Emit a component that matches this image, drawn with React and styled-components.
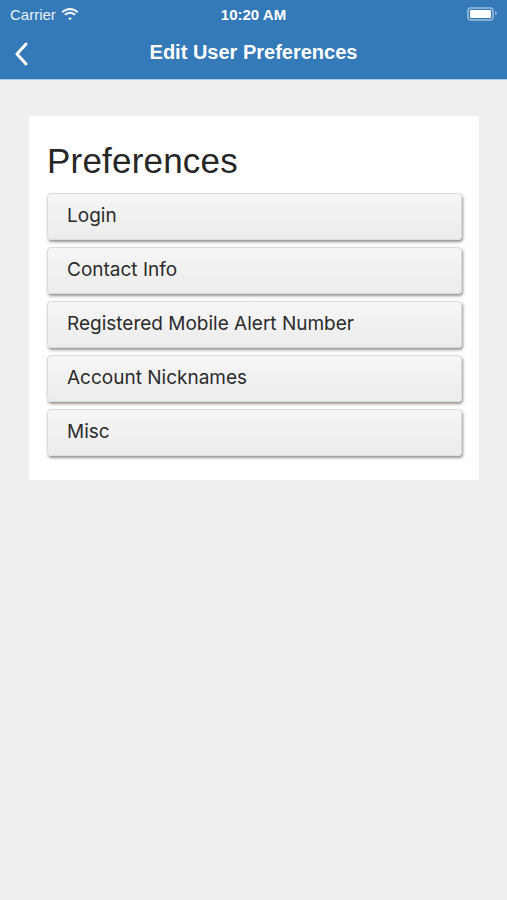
import React from "react";
import styled, { createGlobalStyle } from "styled-components";

const GlobalStyle = createGlobalStyle`
	html, body {
		margin: 0;
		padding: 0;
		background: #efefef;
		font-family: "Liberation Sans", Arial, sans-serif;
	}
`;

const Screen = styled.div`
	width: 507px;
	min-height: 900px;
	background: #efefef;
`;

const Header = styled.header`
	background: #3479b8;
	border-bottom: 1px solid #a9c6e2;
	height: 79px;
	color: #fff;
	display: flex;
	flex-direction: column;
`;

const StatusBar = styled.div`
	height: 28px;
	display: grid;
	grid-template-columns: 1fr auto 1fr;
	align-items: center;
	padding: 0 10px;
	font-size: 15px;
`;

const Carrier = styled.div`
	display: flex;
	align-items: center;
	gap: 5px;
	opacity: 0.9;
`;

const Clock = styled.div`
	font-weight: bold;
	font-size: 15px;
`;

const Battery = styled.div`
	justify-self: end;
	width: 21px;
	height: 8px;
	border: 2px solid rgba(255, 255, 255, 0.4);
	border-radius: 4px;
	background: #fff;
	background-clip: content-box;
	padding: 1px;
	position: relative;
	margin-right: 3px;

	&::after {
		content: "";
		position: absolute;
		right: -5px;
		top: 2px;
		width: 2px;
		height: 4px;
		border-radius: 0 2px 2px 0;
		background: rgba(255, 255, 255, 0.4);
	}
`;

const NavBar = styled.div`
	flex: 1;
	display: grid;
	grid-template-columns: 60px 1fr 60px;
	align-items: center;
`;

const BackButton = styled.button`
	background: none;
	border: 0;
	padding: 0 0 0 14px;
	display: flex;
	align-items: center;
	color: #fff;
`;

const Title = styled.h1`
	margin: 0;
	text-align: center;
	font-size: 20px;
	font-weight: bold;
	padding-bottom: 2px;
`;

const Content = styled.main`
	padding: 36px 28px 0 29px;
`;

const Card = styled.section`
	background: #fff;
	padding: 24px 18px 24px 18px;
	display: flex;
	flex-direction: column;
`;

const Heading = styled.h2`
	margin: 0 0 11px 0;
	font-size: 35px;
	font-weight: normal;
	color: #262626;
	line-height: 42px;
	letter-spacing: 0.2px;
`;

const List = styled.div`
	display: flex;
	flex-direction: column;
	gap: 7px;
`;

const Item = styled.button`
	height: 47px;
	width: 415px;
	text-align: left;
	padding: 0 0 2px 19px;
	font-family: Inter, "Liberation Sans", sans-serif;
	font-size: 19px;
	color: #2b2b2b;
	background: linear-gradient(#f6f6f6, #ececec);
	border: 1px solid #dcdcdc;
	border-radius: 4px;
	box-shadow: 1px 2px 3px rgba(70, 55, 45, 0.55);
`;

const items = [
	"Login",
	"Contact Info",
	"Registered Mobile Alert Number",
	"Account Nicknames",
	"Misc",
];

const App = () => {
	return (
		<Screen>
			<GlobalStyle />
			<Header>
				<StatusBar>
					<Carrier>
						Carrier
						<svg width="18" height="13" viewBox="0 0 18 13" fill="#fff">
							<path d="M9 2.2c2.7 0 5.1 1 7 2.7l1.4-1.5C15.1 1.3 12.2 0 9 0S2.9 1.3.6 3.4L2 4.9c1.9-1.7 4.3-2.7 7-2.7z" />
							<path d="M9 5.9c1.7 0 3.2.6 4.4 1.7l1.4-1.5C13.3 4.7 11.2 3.8 9 3.8s-4.3.9-5.8 2.3l1.4 1.5C5.8 6.5 7.3 5.9 9 5.9z" />
							<path d="M9 9.5c.8 0 1.4.3 1.9.7L9 12.3 7.1 10.2c.5-.4 1.1-.7 1.9-.7z" />
						</svg>
					</Carrier>
					<Clock>10:20 AM</Clock>
					<Battery />
				</StatusBar>
				<NavBar>
					<BackButton aria-label="Back">
						<svg width="14" height="24" viewBox="0 0 14 24" fill="none">
							<path d="M12 2L3 12l9 10" stroke="#fff" strokeWidth="3" strokeLinecap="round" strokeLinejoin="round" />
						</svg>
					</BackButton>
					<Title>Edit User Preferences</Title>
					<span />
				</NavBar>
			</Header>
			<Content>
				<Card>
					<Heading>Preferences</Heading>
					<List>
						{items.map((item) => (
							<Item key={item}>{item}</Item>
						))}
					</List>
				</Card>
			</Content>
		</Screen>
	);
};

export default App;
